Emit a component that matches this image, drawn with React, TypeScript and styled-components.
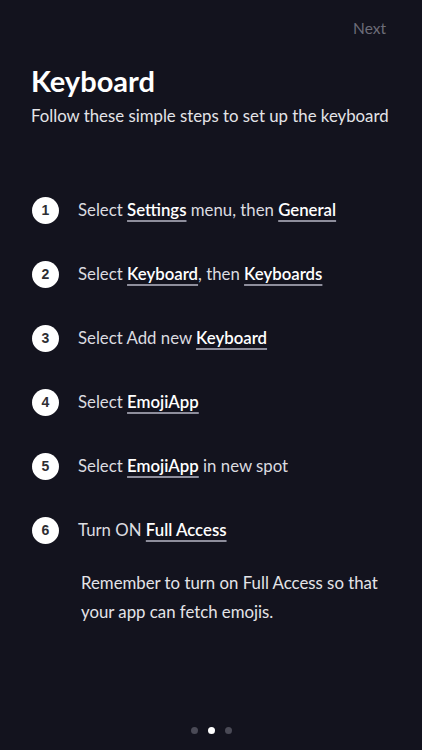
import React from "react";
import styled, { createGlobalStyle } from "styled-components";

const Global = createGlobalStyle`
  html, body { margin: 0; padding: 0; background: #13131e; }
  body { font-family: "Lato", "Noto Sans", sans-serif; -webkit-font-smoothing: antialiased; }
`;

const Screen = styled.div`
  width: 422px;
  height: 750px;
  background: #13131e;
  display: flex;
  flex-direction: column;
  box-sizing: border-box;
  overflow: hidden;
`;

const TopBar = styled.div`
  display: flex;
  justify-content: flex-end;
  padding: 18px 36px 0 0;
  height: 36px;
  box-sizing: border-box;
`;

const NextButton = styled.span`
  color: #6c6c78;
  font-size: 15.5px;
  line-height: 20px;
`;

const Header = styled.div`
  padding: 28px 0 0 31px;
`;

const Title = styled.h1`
  margin: 0;
  color: #ffffff;
  font-size: 29px;
  font-weight: 700;
  line-height: 34px;
`;

const Subtitle = styled.p`
  margin: 7px 0 0;
  color: #e4e4e8;
  font-size: 16.8px;
  line-height: 22px;
`;

const Steps = styled.ol`
  list-style: none;
  margin: 69px 0 0;
  padding: 0 0 0 32px;
  display: flex;
  flex-direction: column;
  gap: 36px;
`;

const Step = styled.li`
  display: flex;
  align-items: center;
  height: 28px;
`;

const Badge = styled.span`
  width: 27px;
  height: 27px;
  border-radius: 50%;
  background: #ffffff;
  color: #2e2e33;
  font-family: "Liberation Sans", Arial, sans-serif;
  font-weight: 700;
  font-size: 14px;
  display: flex;
  align-items: center;
  justify-content: center;
  flex-shrink: 0;
`;

const StepText = styled.span`
  margin-left: 19px;
  color: #dcdce0;
  font-size: 16.8px;
  line-height: 22px;
`;

const Link = styled.span`
  color: #ffffff;
  font-weight: 600;
  text-decoration: underline;
  text-decoration-color: #8e8e9c;
  text-decoration-thickness: 2px;
  text-underline-offset: 4px;
`;

const Note = styled.p`
  margin: 24px 0 0 81px;
  width: 320px;
  color: #e4e4e8;
  font-size: 16.8px;
  line-height: 29px;
`;

const Spacer = styled.div`
  flex: 1;
`;

const Dots = styled.div`
  display: flex;
  justify-content: center;
  gap: 10px;
  padding-bottom: 16px;
`;

const Dot = styled.span<{ $active?: boolean }>`
  width: 7px;
  height: 7px;
  border-radius: 50%;
  background: ${(p) => (p.$active ? "#ffffff" : "#4a4a56")};
`;

const steps: React.ReactNode[] = [
  <>Select <Link>Settings</Link> menu, then <Link>General</Link></>,
  <>Select <Link>Keyboard</Link>, then <Link>Keyboards</Link></>,
  <>Select Add new <Link>Keyboard</Link></>,
  <>Select <Link>EmojiApp</Link></>,
  <>Select <Link>EmojiApp</Link> in new spot</>,
  <>Turn ON <Link>Full Access</Link></>,
];

export default function App() {
  return (
    <Screen>
      <Global />
      <TopBar>
        <NextButton>Next</NextButton>
      </TopBar>
      <Header>
        <Title>Keyboard</Title>
        <Subtitle>Follow these simple steps to set up the keyboard</Subtitle>
      </Header>
      <Steps>
        {steps.map((s, i) => (
          <Step key={i}>
            <Badge>{i + 1}</Badge>
            <StepText>{s}</StepText>
          </Step>
        ))}
      </Steps>
      <Note>Remember to turn on Full Access so that your app can fetch emojis.</Note>
      <Spacer />
      <Dots>
        <Dot />
        <Dot $active />
        <Dot />
      </Dots>
    </Screen>
  );
}
